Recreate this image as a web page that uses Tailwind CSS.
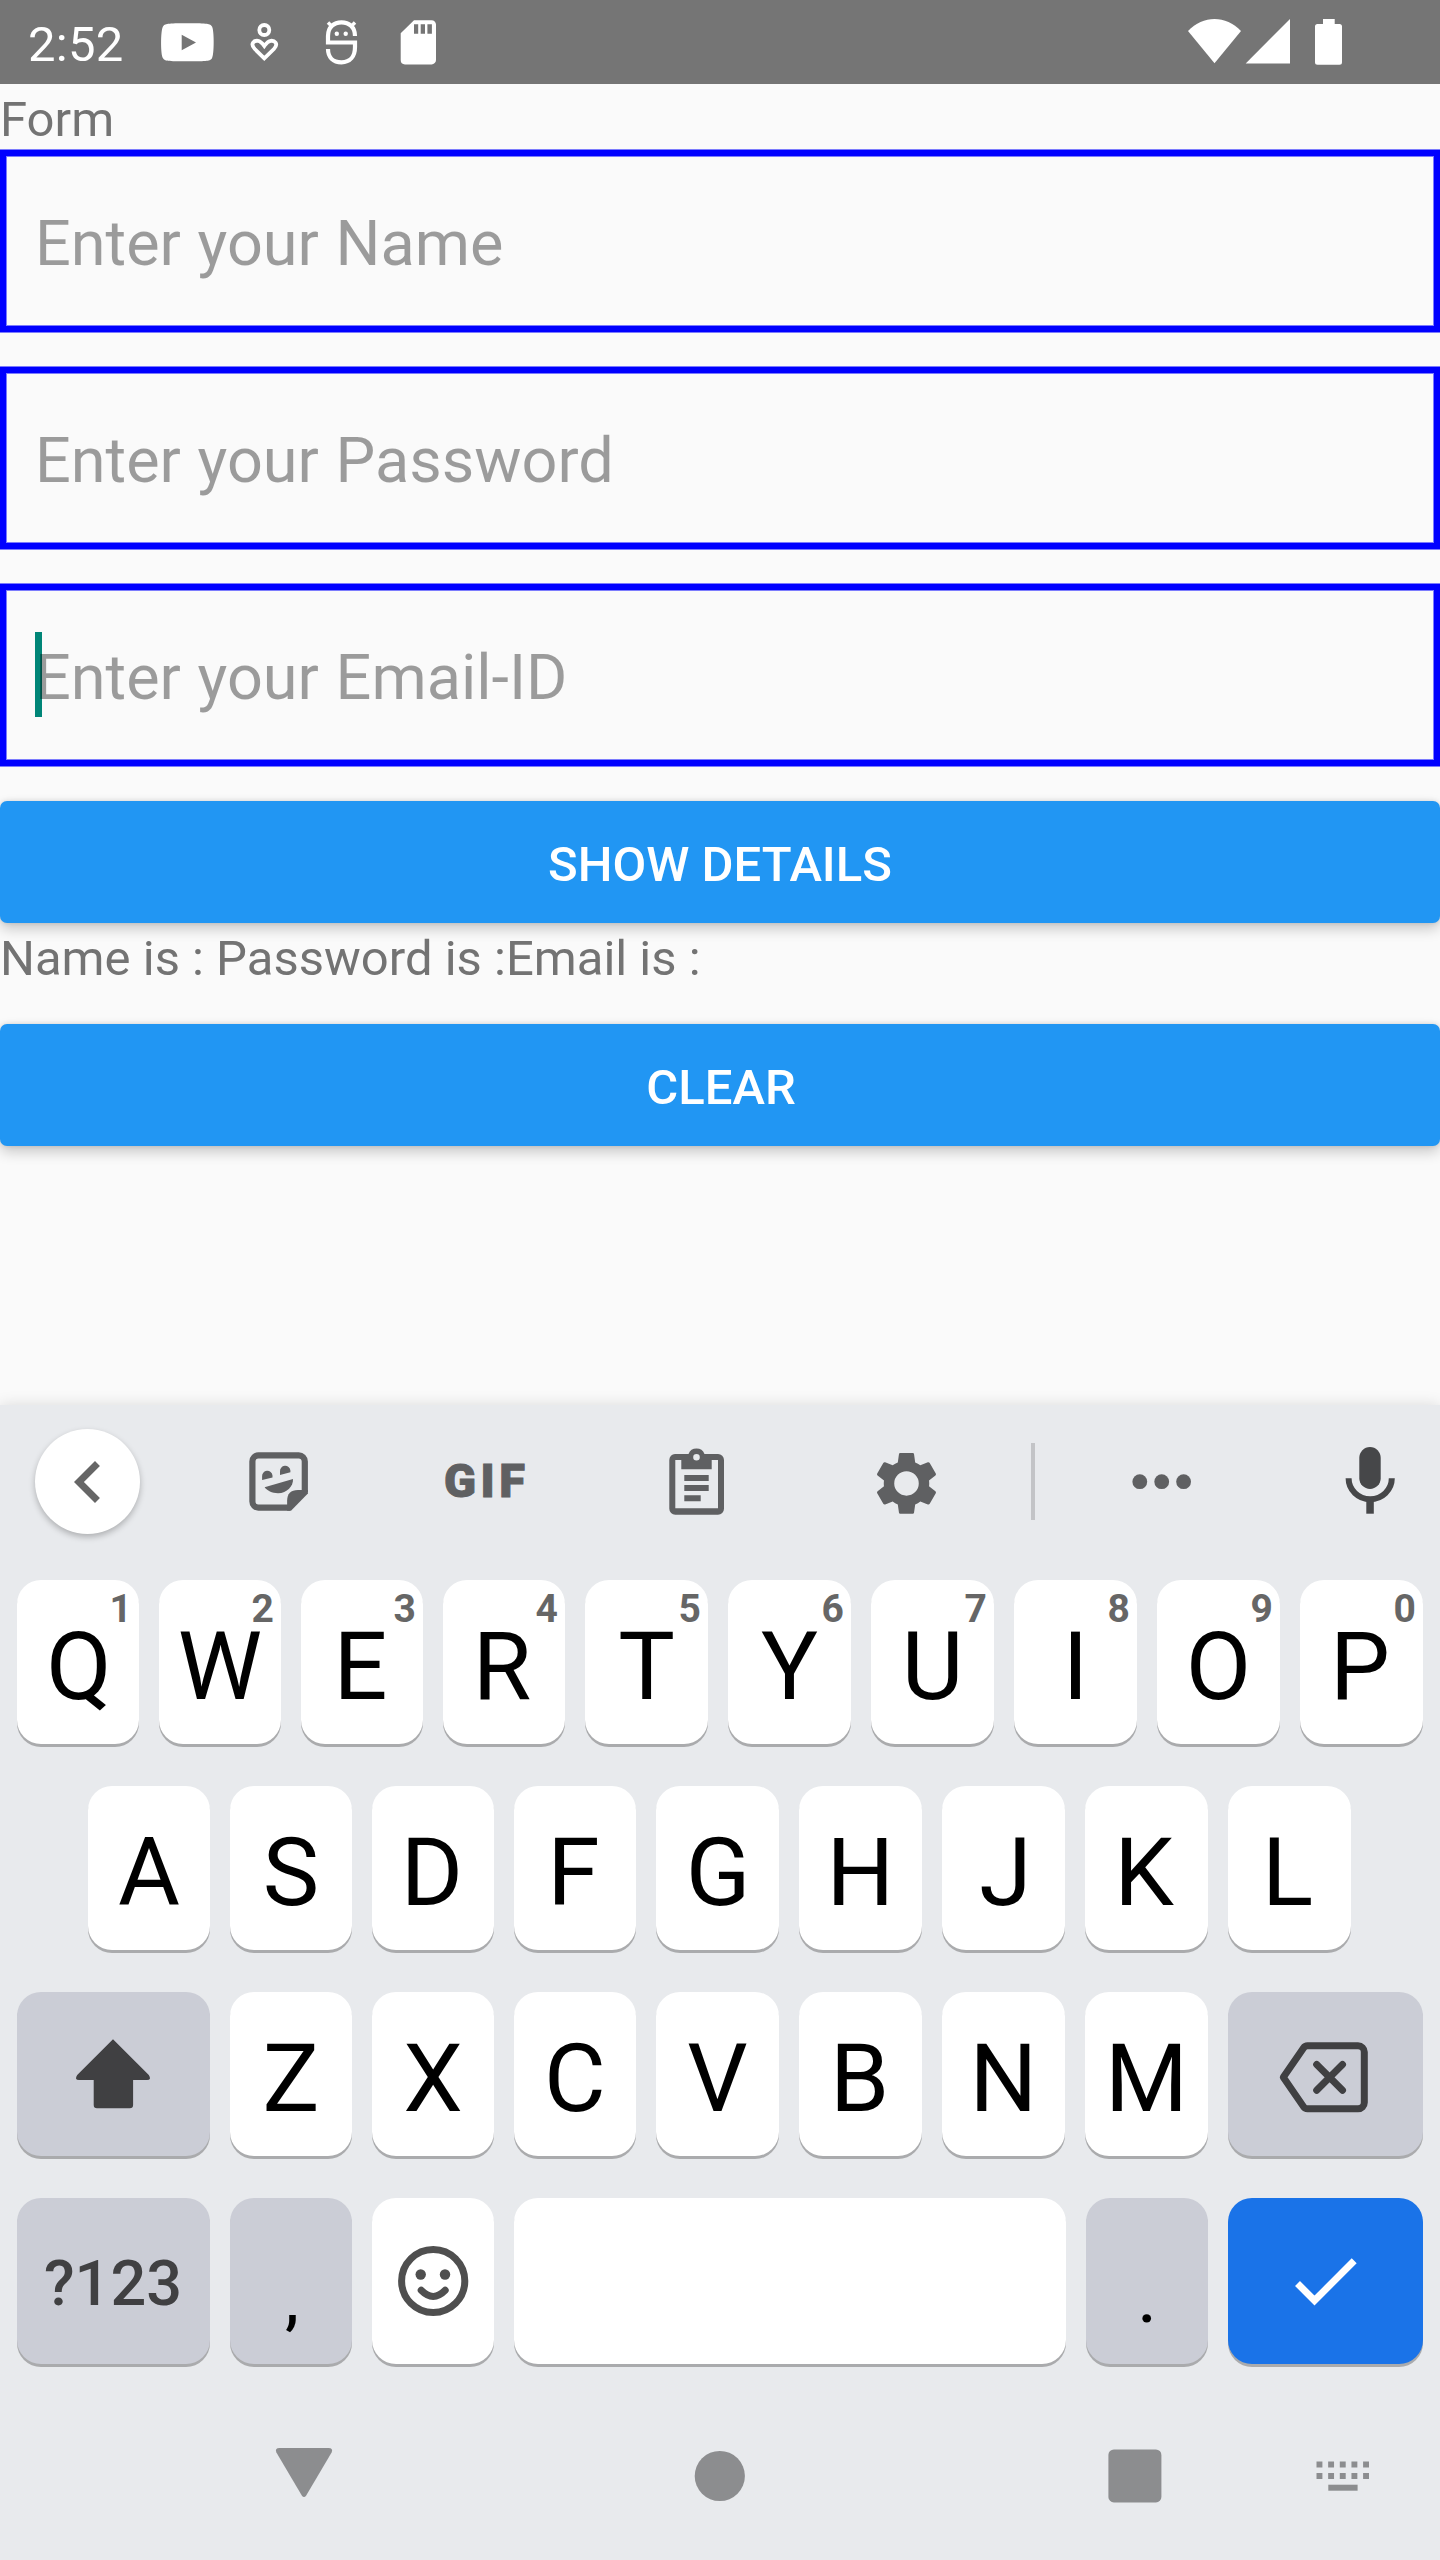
<!DOCTYPE html>
<html lang="en">
<head>
<meta charset="utf-8">
<title>Form</title>
<script src="https://cdn.jsdelivr.net/npm/@tailwindcss/browser@4"></script>
</head>
<body class="w-[1440px] h-[2560px] overflow-hidden bg-[#fafafa] font-['Roboto',sans-serif] text-[49px] flex flex-col">

<!-- Status bar -->
<header class="h-[84px] shrink-0 bg-[#757575] text-white flex overflow-hidden">
  <div class="ml-7 w-[96px] leading-[89px] tracking-[0.3px] whitespace-nowrap">2:52</div>
  <svg class="ml-[30px] w-[66px] h-[84px] shrink-0" viewBox="154 0 66 84"><path fill="#fff" fill-rule="evenodd" d="M187.500 23.300C208 23.300 210 23.700 212 26.500C214.300 30 214.300 55 212 58.200C210 61 208 61.300 187.500 61.300S165 61 163 58.200C160.500 55 160.500 30 163 26.500C165 23.700 167 23.300 187.500 23.300ZM181.700 34.700V50.300L196 42.500Z"/></svg>
  <svg class="ml-[20px] w-[48px] h-[84px] shrink-0" viewBox="240 0 48 84" fill="none" stroke="#fff" stroke-width="3.800"><circle cx="264.300" cy="30" r="5"/><path d="M264.300 58.400L254.800 49C249.500 43.500 254.500 40.300 258 40.800C261 41.200 262.500 43.500 264.300 46C266.200 43.500 267.700 41.200 270.700 40.800C274.200 40.300 279.100 43.500 273.900 49Z"/></svg>
  <svg class="ml-[28px] w-[50px] h-[84px] shrink-0" viewBox="316 0 50 84" fill="none" stroke="#fff" stroke-width="4.200"><path d="M355 36C355 27 349 22.300 341.500 22.300S328 27 328 36V42.500H355V47C355 56.500 350 62.300 341.500 62.300S328 57 328 49"/><path stroke-width="3.500" d="M328 22.500L333 27.500M355 22.500L350 27.500"/><g fill="#fff" stroke="none"><circle cx="336.800" cy="33.700" r="2.200"/><circle cx="345.700" cy="33.700" r="2.200"/></g></svg>
  <svg class="ml-[26px] w-[52px] h-[84px] shrink-0" viewBox="392 0 52 84"><path fill="#fff" fill-rule="evenodd" d="M414 20.200H431.600A4.400 4.400 0 0 1 436 24.600V60A4.400 4.400 0 0 1 431.600 64.400H405A4.400 4.400 0 0 1 400.700 60V33.300ZM414 24.300V33.700H418.200V24.300ZM420.700 24.300V33.700H425V24.300ZM427.400 24.300V33.700H431.900V24.300Z"/></svg>
  <svg class="ml-auto mr-[90px] w-[170px] h-[84px] shrink-0" viewBox="1180 0 170 84" fill="#fff"><path d="M1214.500 63.300L1188 31C1203 15 1226 15 1241 31Z"/><path d="M1245.700 63.500H1290V19Z"/><path d="M1323 19H1334.700V24H1339.500A2.500 2.500 0 0 1 1342 26.500V62.200A2.500 2.500 0 0 1 1339.500 64.700H1317.500A2.500 2.500 0 0 1 1315 62.200V26.500A2.500 2.500 0 0 1 1317.500 24H1323Z"/></svg>
</header>

<!-- Form -->
<main class="h-[1321px] shrink-0 flex flex-col text-[#737373]">
  <div class="h-[65px] leading-[71px]">Form</div>
  <div class="flex flex-col gap-[33px] text-[63px] text-black/38 [word-spacing:1px]">
    <div class="border-y border-[#7c7cfd]">
      <div class="h-[182px] border-6 border-[#00f] pl-[29px] leading-[175px] shadow-[inset_0_0_0_1px_#7c7cfd]">Enter your Name</div>
    </div>
    <div class="border-y border-[#7c7cfd]">
      <div class="h-[182px] border-6 border-[#00f] pl-[29px] leading-[175px] shadow-[inset_0_0_0_1px_#7c7cfd]">Enter your Password</div>
    </div>
    <div class="border-y border-[#7c7cfd]">
      <div class="relative h-[182px] border-6 border-[#00f] pl-[29px] leading-[175px] shadow-[inset_0_0_0_1px_#7c7cfd]"><span class="absolute left-[29px] top-[42px] w-[7px] h-[85px] bg-[#008577]"></span><span class="relative">Enter your Email-ID</span></div>
    </div>
  </div>
  <button class="mt-[34px] h-[122px] rounded-[7px] bg-[#2196f3] text-white font-medium leading-[127px] shadow-[0_6px_14px_rgba(0,0,0,0.2),0_0_5px_rgba(0,0,0,0.12)]">SHOW DETAILS</button>
  <div class="h-[65px] leading-[71px]">Name is : Password is :Email is :</div>
  <button class="mt-[36px] h-[122px] rounded-[7px] bg-[#2196f3] pl-2 text-white font-medium leading-[127px] shadow-[0_6px_14px_rgba(0,0,0,0.2),0_0_5px_rgba(0,0,0,0.12)]"><span class="mr-[6px]">CLEAR</span></button>
</main>

<!-- Keyboard -->
<section class="relative h-[1155px] shrink-0 bg-[#e8eaed] flex flex-col shadow-[0_0_14px_rgba(0,0,0,0.13)]">
  <div class="h-[153px] flex items-center text-[#5f6062]">
    <div class="ml-[35px] w-[105px] h-[105px] rounded-full bg-white shadow-[0_3px_6px_rgba(0,0,0,0.25)] flex items-center justify-center">
      <svg class="w-[84px] h-[84px] shrink-0" viewBox="0 0 24 24" fill="#666"><path d="M15.410 7.410L14 6l-6 6 6 6 1.410-1.410L10.830 12z"/></svg>
    </div>
    <svg class="ml-[97px] mt-px w-[84px] h-[84px] shrink-0" viewBox="0 0 84 84" fill="currentColor"><path fill="none" stroke="currentColor" stroke-width="6.200" d="M53 67.600H21.400a6 6 0 0 1-6-6V21.400a6 6 0 0 1 6-6H61.800a6 6 0 0 1 6 6V52"/><path d="M50.100 70.700V61Q50.100 50 61 50H70.900V53.500L54 70.700Z"/><path d="M25.100 40V36.500A5.200 5.200 0 0 1 35.500 35.500V37.400ZM43 35V31.500A5.200 5.200 0 0 1 53.400 30.500V32.300Z"/><path d="M27.600 47.300L56 39C56.500 46 50 53.300 41 53.300C35 53.300 30 50.500 27.600 47.300Z"/></svg>
    <div class="ml-[122px] w-[84px] text-[47px] leading-[54px] pb-[2px] pl-px font-black tracking-[4.500px] whitespace-nowrap [-webkit-text-stroke:1px_#5f6062]">GIF</div>
    <svg class="ml-[128px] mt-px w-[84px] h-[84px] shrink-0" viewBox="0 0 84 84" fill="currentColor"><path fill-rule="evenodd" d="M20 14H33.500A8.600 8.600 0 0 1 49.500 14H63A6 6 0 0 1 69 20V68.700A6 6 0 0 1 63 74.700H20.300A6 6 0 0 1 14.300 68.700V20A6 6 0 0 1 20 14ZM20.300 20V68.300H63V20H56.700V29.300H26.300V20ZM41.500 14A3.300 3.300 0 1 0 41.500 20.600A3.300 3.300 0 1 0 41.500 14Z"/><path d="M29.300 35H53.700V41H29.300ZM29.300 45H53.700V51H29.300ZM29.300 55.300H45.700V61.300H29.300Z"/></svg>
    <svg class="ml-[126px] mt-px w-[84px] h-[84px] shrink-0" viewBox="0 0 84 84" fill="currentColor"><path transform="translate(5.140 7.040) scale(3.030)" fill-rule="evenodd" d="M19.430 12.980c.04-.32.07-.64.07-.98s-.03-.66-.07-.98l2.110-1.650c.19-.15.24-.42.12-.64l-2-3.460c-.12-.22-.39-.3-.61-.22l-2.490 1c-.52-.4-1.080-.73-1.690-.98l-.38-2.650C14.460 2.180 14.250 2 14 2h-4c-.25 0-.46.18-.49.42l-.38 2.650c-.61.25-1.170.59-1.690.98l-2.490-1c-.23-.09-.49 0-.61.22l-2 3.460c-.13.22-.07.49.12.64l2.110 1.650c-.04.32-.07.65-.07.98s.03.66.07.98l-2.110 1.650c-.19.15-.24.42-.12.64l2 3.460c.12.22.39.3.61.22l2.490-1c.52.4 1.080.73 1.690.98l.38 2.650c.03.24.24.42.49.42h4c.25 0 .46-.18.49-.42l.38-2.650c.61-.25 1.170-.59 1.690-.98l2.490 1c.23.09.49 0 .61-.22l2-3.460c.12-.22.07-.49-.12-.64zM12 7.950a4.050 4.050 0 1 0 0 8.100a4.050 4.050 0 1 0 0-8.100z"/></svg>
    <div class="ml-[82px] w-1 h-[77px] bg-[#c3c4c7]"></div>
    <svg class="ml-[85px] mt-px w-[84px] h-[84px] shrink-0" viewBox="0 0 84 84" fill="currentColor"><circle cx="19.800" cy="41.700" r="7.400"/><circle cx="41.700" cy="41.700" r="7.400"/><circle cx="63.600" cy="41.700" r="7.400"/></svg>
    <svg class="ml-[124px] mt-px w-[84px] h-[84px] shrink-0" viewBox="0 0 84 84" fill="#464749"><rect x="31.300" y="7" width="21.400" height="42" rx="10.700"/><path fill="none" stroke="#464749" stroke-width="6" d="M20.600 38.300A21.400 20.700 0 0 0 63.800 38.300"/><rect x="38.300" y="60" width="7.500" height="13.700"/></svg>
  </div>

  <div class="mt-[22px] flex flex-col gap-[42px] text-[95px] leading-[173px] text-black text-center">
    <div class="pl-[17px] flex gap-5 h-[164px]">
      <div class="relative w-[122px] h-[164px] rounded-3xl bg-white shadow-[0_3px_0_#aaabad] pl-[2px]">Q<span class="absolute top-0 right-[7px] text-[39px] leading-[58px] font-bold text-[#666]">1</span></div>
      <div class="relative w-[122px] h-[164px] rounded-3xl bg-white shadow-[0_3px_0_#aaabad]">W<span class="absolute top-0 right-[7px] text-[39px] leading-[58px] font-bold text-[#666]">2</span></div>
      <div class="relative w-[122px] h-[164px] rounded-3xl bg-white shadow-[0_3px_0_#aaabad] pr-[3px]">E<span class="absolute top-0 right-[7px] text-[39px] leading-[58px] font-bold text-[#666]">3</span></div>
      <div class="relative w-[122px] h-[164px] rounded-3xl bg-white shadow-[0_3px_0_#aaabad] pr-[4px]">R<span class="absolute top-0 right-[7px] text-[39px] leading-[58px] font-bold text-[#666]">4</span></div>
      <div class="relative w-[123px] h-[164px] rounded-3xl bg-white shadow-[0_3px_0_#aaabad]">T<span class="absolute top-0 right-[7px] text-[39px] leading-[58px] font-bold text-[#666]">5</span></div>
      <div class="relative w-[123px] h-[164px] rounded-3xl bg-white shadow-[0_3px_0_#aaabad]">Y<span class="absolute top-0 right-[7px] text-[39px] leading-[58px] font-bold text-[#666]">6</span></div>
      <div class="relative w-[123px] h-[164px] rounded-3xl bg-white shadow-[0_3px_0_#aaabad]">U<span class="absolute top-0 right-[7px] text-[39px] leading-[58px] font-bold text-[#666]">7</span></div>
      <div class="relative w-[123px] h-[164px] rounded-3xl bg-white shadow-[0_3px_0_#aaabad]">I<span class="absolute top-0 right-[7px] text-[39px] leading-[58px] font-bold text-[#666]">8</span></div>
      <div class="relative w-[123px] h-[164px] rounded-3xl bg-white shadow-[0_3px_0_#aaabad]">O<span class="absolute top-0 right-[7px] text-[39px] leading-[58px] font-bold text-[#666]">9</span></div>
      <div class="relative w-[123px] h-[164px] rounded-3xl bg-white shadow-[0_3px_0_#aaabad] pr-[3px]">P<span class="absolute top-0 right-[7px] text-[39px] leading-[58px] font-bold text-[#666]">0</span></div>
    </div>
    <div class="pl-[88px] flex gap-5 h-[164px]">
      <div class="w-[122px] h-[164px] rounded-3xl bg-white shadow-[0_3px_0_#aaabad]">A</div>
      <div class="w-[122px] h-[164px] rounded-3xl bg-white shadow-[0_3px_0_#aaabad]">S</div>
      <div class="w-[122px] h-[164px] rounded-3xl bg-white shadow-[0_3px_0_#aaabad] pr-[2px]">D</div>
      <div class="w-[122px] h-[164px] rounded-3xl bg-white shadow-[0_3px_0_#aaabad] pr-[3px]">F</div>
      <div class="w-[123px] h-[164px] rounded-3xl bg-white shadow-[0_3px_0_#aaabad] pl-px">G</div>
      <div class="w-[123px] h-[164px] rounded-3xl bg-white shadow-[0_3px_0_#aaabad]">H</div>
      <div class="w-[123px] h-[164px] rounded-3xl bg-white shadow-[0_3px_0_#aaabad] pl-[4px]">J</div>
      <div class="w-[123px] h-[164px] rounded-3xl bg-white shadow-[0_3px_0_#aaabad] pr-[5px]">K</div>
      <div class="w-[123px] h-[164px] rounded-3xl bg-white shadow-[0_3px_0_#aaabad] pr-[4px]">L</div>
    </div>
    <div class="pl-[17px] flex gap-5 h-[164px]">
      <div class="w-[193px] h-[164px] rounded-3xl bg-[#cbcdd6] shadow-[0_3px_0_#aaabad]">
        <svg class="w-[193px] h-[164px]" viewBox="0 0 193 164"><path fill="#404042" d="M96 47.300L131.800 83Q135 88 130 88H116.100V113Q116.100 116.300 112.800 116.300H80Q76.700 116.300 76.700 113V88H62Q57 88 60.200 83Z"/></svg>
      </div>
      <div class="w-[122px] h-[164px] rounded-3xl bg-white shadow-[0_3px_0_#aaabad]">Z</div>
      <div class="w-[122px] h-[164px] rounded-3xl bg-white shadow-[0_3px_0_#aaabad]">X</div>
      <div class="w-[122px] h-[164px] rounded-3xl bg-white shadow-[0_3px_0_#aaabad]">C</div>
      <div class="w-[123px] h-[164px] rounded-3xl bg-white shadow-[0_3px_0_#aaabad]">V</div>
      <div class="w-[123px] h-[164px] rounded-3xl bg-white shadow-[0_3px_0_#aaabad] pr-[2px]">B</div>
      <div class="w-[123px] h-[164px] rounded-3xl bg-white shadow-[0_3px_0_#aaabad]">N</div>
      <div class="w-[123px] h-[164px] rounded-3xl bg-white shadow-[0_3px_0_#aaabad]">M</div>
      <div class="w-[195px] h-[164px] rounded-3xl bg-[#cbcdd6] shadow-[0_3px_0_#aaabad]">
        <svg class="w-[195px] h-[164px]" viewBox="0 0 195 164" fill="none" stroke="#404042" stroke-width="7"><path stroke-linejoin="round" d="M79.500 53.800H130A6.300 6.300 0 0 1 136.300 60.100V110.500A6.300 6.300 0 0 1 130 116.800H79.500Q77 116.800 75.500 114.600L55.300 85.300L75.500 56Q77 53.800 79.500 53.800Z"/><path stroke-linecap="round" d="M88.700 72.500L114.500 98.300M114.500 72.500L88.700 98.300"/></svg>
      </div>
    </div>
    <div class="pl-[17px] flex gap-5 h-[166px]">
      <div class="w-[193px] h-[166px] rounded-3xl bg-[#cbcdd6] shadow-[0_3px_0_#aaabad] text-[63px] leading-[171px] font-medium text-[#404042] pr-px">?123</div>
      <div class="w-[122px] h-[166px] rounded-3xl bg-[#cbcdd6] shadow-[0_3px_0_#aaabad] text-[63px] leading-[205px] font-medium pl-[2px]">,</div>
      <div class="w-[122px] h-[166px] rounded-3xl bg-white shadow-[0_3px_0_#aaabad]">
        <svg class="w-[122px] h-[166px]" viewBox="0 0 122 166" fill="#4f4f4f"><g fill="none" stroke="#4f4f4f" stroke-width="7"><circle cx="61.200" cy="83" r="31.600"/><path stroke-linecap="round" d="M49.200 92.300Q61.200 104.500 73.200 92.300"/></g><circle cx="48.700" cy="76.500" r="5.200"/><circle cx="73" cy="76.500" r="5.200"/></svg>
      </div>
      <div class="w-[552px] h-[166px] rounded-3xl bg-white shadow-[0_3px_0_#aaabad]"></div>
      <div class="w-[122px] h-[166px] rounded-3xl bg-[#cbcdd6] shadow-[0_3px_0_#aaabad] text-[63px] leading-[205px] font-medium">.</div>
      <div class="w-[195px] h-[166px] rounded-3xl bg-[#1a73e8] shadow-[0_3px_0_#aaabad]">
        <svg class="w-[195px] h-[166px]" viewBox="0 0 195 166" fill="none" stroke="#fff" stroke-width="7"><path d="M69.500 85.500L86.500 102.500L126.200 62.800"/></svg>
      </div>
    </div>
  </div>

  <!-- System navigation -->
  <nav class="mt-[62px] h-[100px] flex items-start">
    <svg class="ml-[262px] w-[84px] h-[100px]" viewBox="262 2426 84 100"><path fill="#8c8d8f" d="M279.500 2448H328.500Q333.500 2448 331.600 2452.500L306.200 2495.500Q304 2498.500 301.800 2495.500L276.400 2452.500Q274.500 2448 279.500 2448Z"/></svg>
    <svg class="ml-[332px] w-[84px] h-[100px]" viewBox="678 2426 84 100"><circle cx="719.800" cy="2476" r="25.100" fill="#8c8d8f"/></svg>
    <svg class="ml-[331px] w-[84px] h-[100px]" viewBox="1093 2426 84 100"><rect x="1108.400" y="2449.400" width="53" height="53" rx="5.500" fill="#8c8d8f"/></svg>
    <svg class="ml-[121px] w-[84px] h-[100px]" viewBox="1298 2426 84 100" fill="none" stroke="#8c8d8f" stroke-width="6"><path stroke-dasharray="5.900 5.750" d="M1316.500 2464.400H1369.200M1316.500 2476H1369.200"/><path d="M1328.300 2487.700H1357.600"/></svg>
  </nav>
</section>
</body>
</html>
